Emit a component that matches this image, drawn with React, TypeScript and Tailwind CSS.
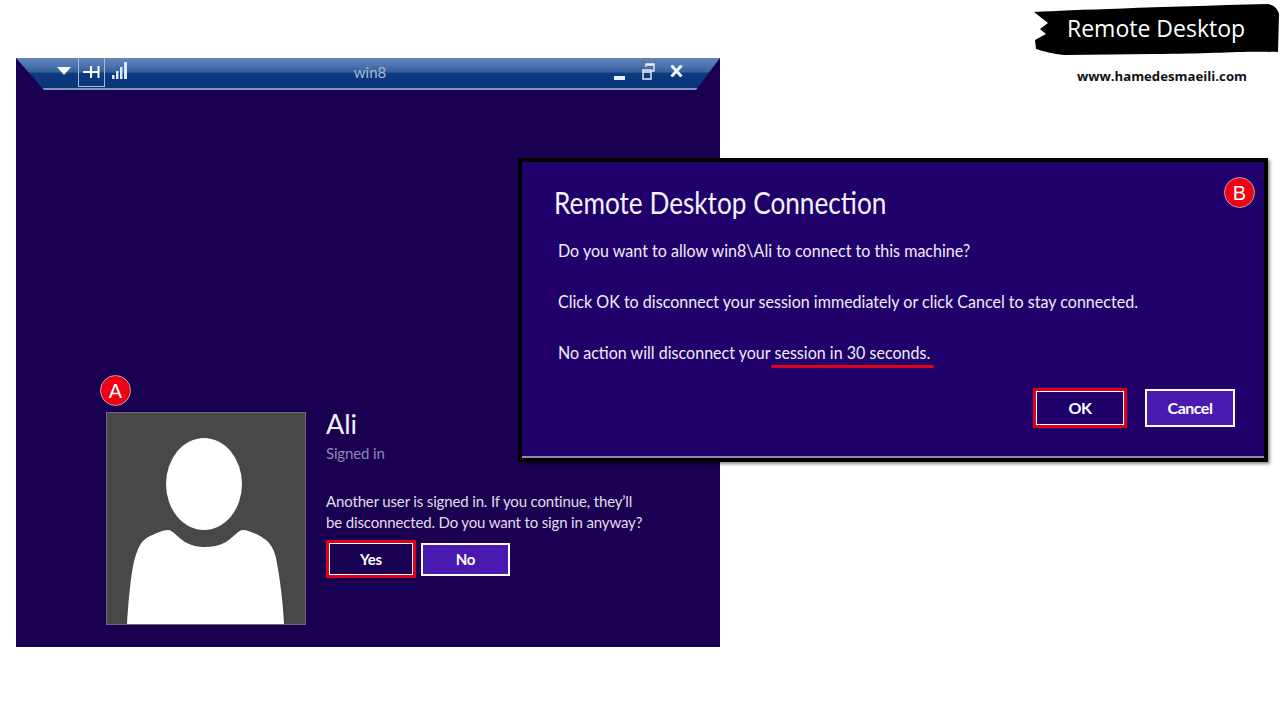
function Badge({ label, className }: { label: string; className: string }) {
  return (
    <div
      className={`absolute flex h-[31px] w-[31px] items-center justify-center rounded-full border border-[#b9a0b8] bg-[#f00012] font-['Liberation_Sans',sans-serif] text-[20px] leading-none text-white ${className}`}
    >
      {label}
    </div>
  );
}

function TitleBar() {
  return (
    <div className="grid h-[32px] grid-cols-[1fr_auto_1fr] border-b-2 border-[#8095bd] bg-[linear-gradient(to_bottom,#6484ba_0%,#4f73ad_25%,#34609f_46%,#0c3a80_52%,#0b3579_100%)] [clip-path:polygon(0_0,100%_0,calc(100%-24px)_100%,28px_100%)]">
      <div className="flex items-start pl-[41px]">
        <svg width="14" height="8" viewBox="0 0 14 8" className="mt-[9px]">
          <path d="M0 0h14L7 8z" fill="#fff" />
        </svg>
        <div className="ml-[7px] flex h-[29px] w-[27px] items-center justify-center border border-t-0 border-[#a9bad8]">
          <svg width="18" height="14" viewBox="0 0 18 14">
            <path d="M0 7h15M8 1v12M15.500 1v12" stroke="#fff" strokeWidth="2" fill="none" />
          </svg>
        </div>
        <svg width="16" height="17" viewBox="0 0 16 17" className="ml-[7px] mt-[4px]">
          <path d="M0 13h2.500v4H0zM4 9h2.500v8H4zM8 5h2.500v12H8zM12 0h3v17h-3z" fill="#dfe6f2" />
        </svg>
      </div>
      <div className="ml-[4px] pt-[4px] font-['Lato',sans-serif] text-[15px] leading-[20px] text-[#a8b8d6]">win8</div>
      <div className="flex items-start justify-end pr-[37px]">
        <svg width="11" height="4" viewBox="0 0 11 4" className="mt-[18px]">
          <path d="M0 0h11v4H0z" fill="#e8edf6" />
        </svg>
        <svg width="13" height="17" viewBox="0 0 13 17" className="ml-[17px] mt-[5px]">
          <path d="M4 4V1h8v7H9M1 7h8v9H1zM1 9h8M5 2h7" stroke="#e8edf6" strokeWidth="1.400" fill="none" />
        </svg>
        <svg width="13" height="12" viewBox="0 0 13 12" className="ml-[15px] mt-[7px]">
          <path d="M1.500 0.500l10 11M11.500 0.500l-10 11" stroke="#f2f5fa" strokeWidth="3" fill="none" />
        </svg>
      </div>
    </div>
  );
}

function Avatar() {
  return (
    <div className="h-[213px] w-[200px] shrink-0 border border-[#6d6a80] bg-[#484848]">
      <svg width="198" height="211" viewBox="0 0 198 211" className="block">
        <ellipse cx="97" cy="71" rx="38" ry="46" fill="#fff" />
        <path
          d="M20 211C22 180 25 150 30 139C33 130 37 126 43 123C50 120 56 117 61 117C66 117 70 124 78 129C85 133 91 134 98 134C105 134 112 133 119 129C127 124 131 117 136 117C141 117 150 121 156 125C163 129 167 136 169 145C173 165 176 190 177 211Z"
          fill="#fff"
        />
      </svg>
    </div>
  );
}

function LoginButton({ label, focused }: { label: string; focused?: boolean }) {
  if (focused) {
    return (
      <div className="h-[38px] w-[90px] border-[3px] border-[#e00018]">
        <div className="flex h-full items-center justify-center border border-white bg-[#190050] text-[15px] font-bold tracking-[-0.2px] text-white">
          {label}
        </div>
      </div>
    );
  }
  return (
    <div className="flex h-[33px] w-[89px] items-center justify-center border-2 border-white bg-[#4a1ab0] text-[15px] font-bold tracking-[-0.2px] text-white">
      {label}
    </div>
  );
}

function RemoteWindow() {
  return (
    <div className="relative h-[589px] w-[704px] bg-[#190050]">
      <TitleBar />
      <Badge label="A" className="left-[84px] top-[317px]" />
      <div className="flex pl-[90px] pt-[322px]">
        <Avatar />
        <div className="ml-[20px] flex flex-col font-['Lato',sans-serif]">
          <div className="-mt-[3px] text-[27px] leading-[30px] text-[#f2f0f8]">Ali</div>
          <div className="mt-[4px] text-[15px] leading-[20px] tracking-[-0.15px] text-[#9186b4]">Signed in</div>
          <div className="mt-[28px] text-[15px] leading-[21px] tracking-[-0.15px] text-[#e2deee]">
            <div>Another user is signed in. If you continue, they’ll</div>
            <div>be disconnected. Do you want to sign in anyway?</div>
          </div>
          <div className="mt-[7px] flex items-center gap-[5px]">
            <LoginButton label="Yes" focused />
            <LoginButton label="No" />
          </div>
        </div>
      </div>
    </div>
  );
}

function ConfirmDialog() {
  return (
    <div className="absolute left-[518px] top-[158px] h-[304px] w-[750px] border-4 border-black bg-[#20006a] font-['Lato',sans-serif] text-white shadow-[2px_2px_3px_rgba(0,0,0,0.45)]">
      <Badge label="B" className="right-[9px] top-[15px]" />
      <div className="flex h-full flex-col border-b-2 border-[#8d89a6] pl-[32px] pr-[29px] pt-[20px]">
        <div className="origin-left scale-x-[0.873] text-[30px] leading-[40px] text-[#f4f2fa]">Remote Desktop Connection</div>
        <div className="ml-[4px] mt-[16px] flex origin-left scale-x-[0.892] flex-col gap-[27px] text-[18px] leading-[24px] text-[#f0eef8]">
          <div className="whitespace-nowrap">Do you want to allow win8\Ali to connect to this machine?</div>
          <div className="whitespace-nowrap">Click OK to disconnect your session immediately or click Cancel to stay connected.</div>
          <div className="whitespace-nowrap">
            No action will disconnect your{" "}
            <span className="-mx-[4px] border-b-[3px] border-[#e00018] px-[4px] pb-[2px]">session in 30 seconds.</span>
          </div>
        </div>
        <div className="mt-[24px] flex items-center justify-end gap-[18px]">
          <div className="h-[40px] w-[94px] border-[3px] border-[#e00018]">
            <div className="flex h-full items-center justify-center border border-white bg-[#20006a] text-[16px] font-bold tracking-[-0.5px]">
              OK
            </div>
          </div>
          <div className="flex h-[38px] w-[90px] items-center justify-center border-2 border-white bg-[#4a1ab0] text-[16px] font-bold tracking-[-0.5px]">
            Cancel
          </div>
        </div>
      </div>
    </div>
  );
}

function Brand() {
  return (
    <div className="flex flex-col items-end pt-[4px]">
      <div className="relative flex h-[51px] w-[246px] items-center pl-[33px]">
        <svg width="246" height="51" viewBox="0 0 246 51" className="absolute inset-0">
          <path
            d="M0 8C40 6 120 3 234 0C240 1 244 5 245 10L244 48C200 47 180 50 120 50C90 50 60 51 30 51C20 50 8 47 2 45L1 36L12 30L6 25L14 19C9 15 4 11 0 8Z"
            fill="#000"
          />
        </svg>
        <div className="relative -mt-[3px] font-['Open_Sans',sans-serif] text-[23px] leading-[30px] text-white">Remote Desktop</div>
      </div>
      <div className="mr-[33px] mt-[12px] font-['Open_Sans',sans-serif] text-[13.2px] font-bold leading-[18px] text-[#111]">
        www.hamedesmaeili.com
      </div>
    </div>
  );
}

export default function App() {
  return (
    <div className="relative flex h-[720px] w-[1280px] justify-between overflow-hidden bg-white">
      <div className="pl-[16px] pt-[58px]">
        <RemoteWindow />
      </div>
      <Brand />
      <ConfirmDialog />
    </div>
  );
}
